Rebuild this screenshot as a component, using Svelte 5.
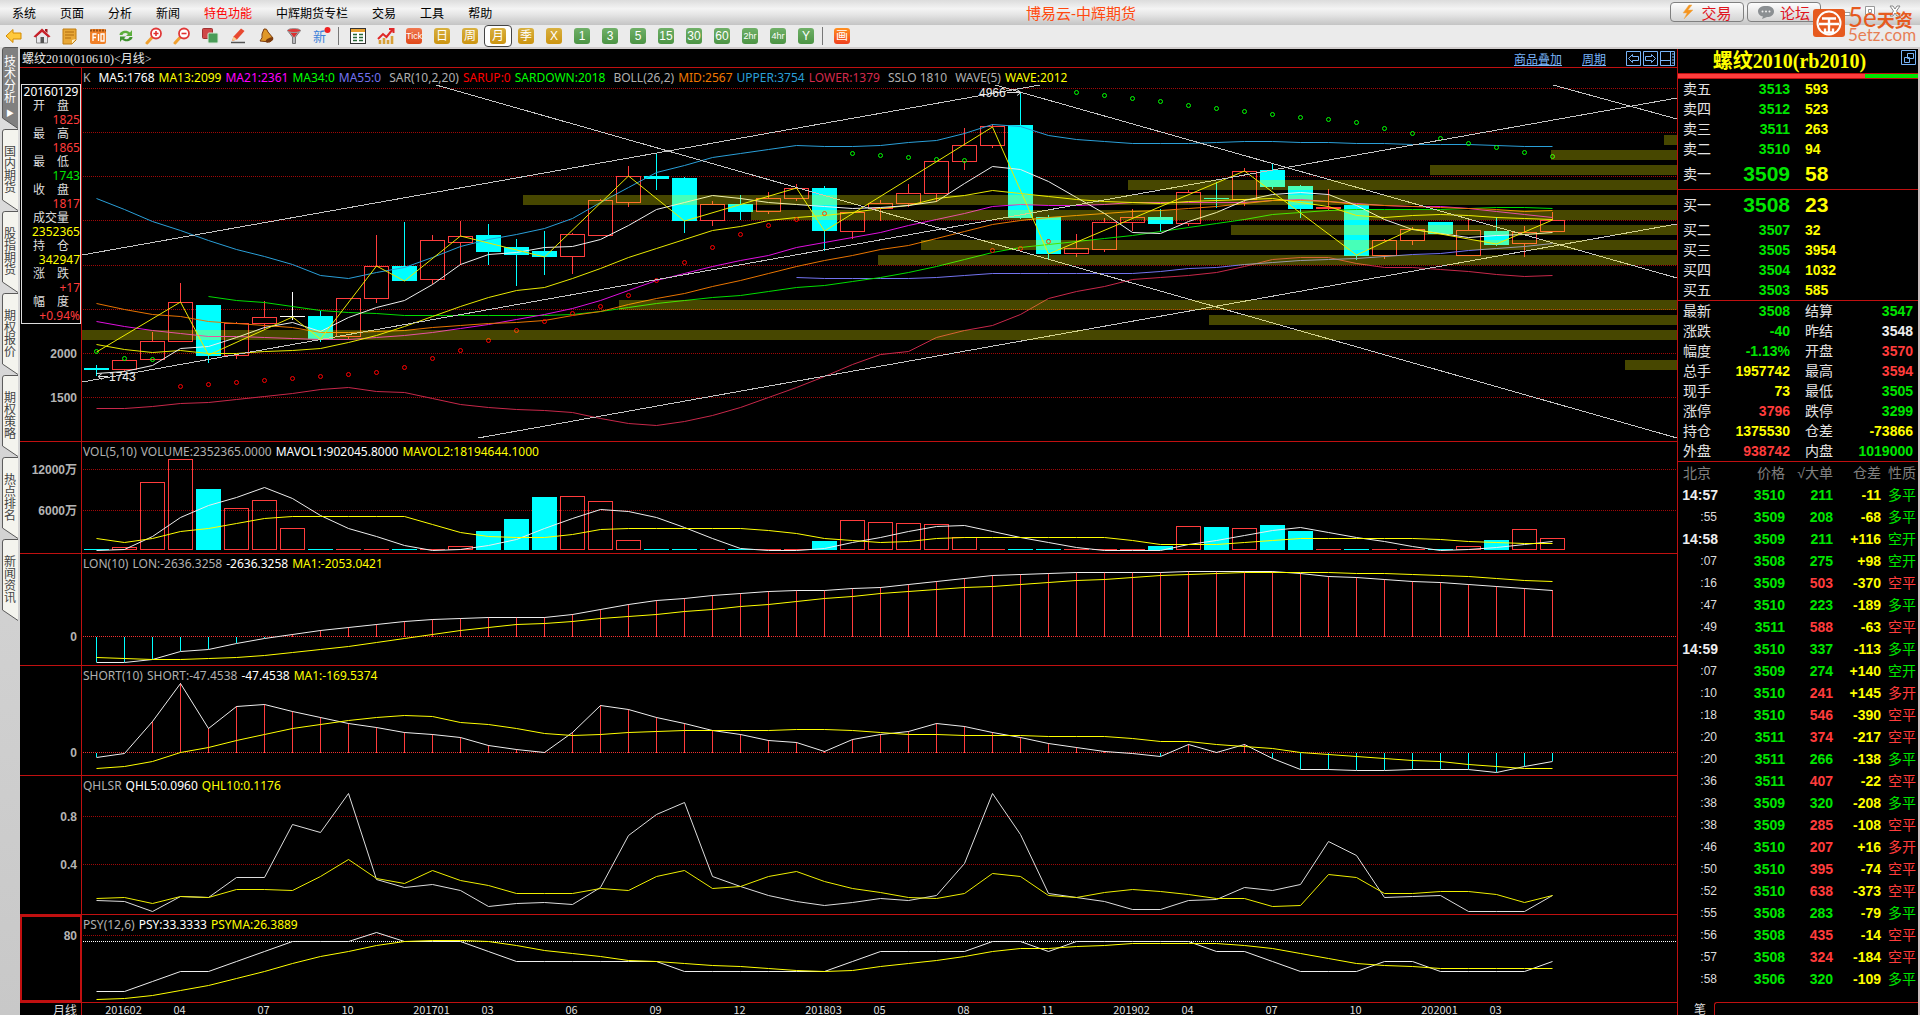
<script lang="ts">
  type Line = { color: string; start?: number; y: number[] };
  type Pane = {
    id: string;
    top: number;
    height: number;
    grid: number[];
    labels: [number, string][];
    legend: [string, string, boolean?][];
    zero?: number;
    lines: Line[];
  };

  const menu = ["系统", "页面", "分析", "新闻", "特色功能", "中辉期货专栏", "交易", "工具", "帮助"];
  const periods = [
    ["日", "gold"], ["周", "gold"], ["月", "gold"], ["季", "gold"], ["X", "gold"],
    ["1", "green"], ["3", "green"], ["5", "green"], ["15", "green"], ["30", "green"],
    ["60", "green"], ["2hr", "green"], ["4hr", "green"], ["Y", "green"],
  ];
  const tools = ["back", "home", "note", "f10", "refresh", "zoomin", "zoomout", "copy", "pencil", "bell", "filter", "new"];
  const sideTabs = ["技术分析", "国内期货", "股指期货", "期权报价", "期权策略", "热点排名", "新闻资讯"];

  const info = [
    ["开　盘", "1825", "up"], ["最　高", "1865", "up"], ["最　低", "1743", "down"],
    ["收　盘", "1817", "up"], ["成交量", "2352365", "yel"], ["持　仓", "342947", "yel"],
    ["涨　跌", "+17", "up"], ["幅　度", "+0.94%", "up"],
  ];

  const asks = [["卖五", "3513", "593"], ["卖四", "3512", "523"], ["卖三", "3511", "263"], ["卖二", "3510", "94"], ["卖一", "3509", "58"]];
  const bids = [["买一", "3508", "23"], ["买二", "3507", "32"], ["买三", "3505", "3954"], ["买四", "3504", "1032"], ["买五", "3503", "585"]];
  const stats = [
    ["最新", "3508", "down", "结算", "3547", "down"],
    ["涨跌", "-40", "down", "昨结", "3548", "even"],
    ["幅度", "-1.13%", "down", "开盘", "3570", "up"],
    ["总手", "1957742", "yel", "最高", "3594", "up"],
    ["现手", "73", "yel", "最低", "3505", "down"],
    ["涨停", "3796", "up", "跌停", "3299", "down"],
    ["持仓", "1375530", "yel", "仓差", "-73866", "yel"],
    ["外盘", "938742", "up", "内盘", "1019000", "down"],
  ];
  const ticks = [
    ["14:57", "3510", "211", "-11", "多平", "down"], [":55", "3509", "208", "-68", "多平", "down"],
    ["14:58", "3509", "211", "+116", "空开", "down"], [":07", "3508", "275", "+98", "空开", "down"],
    [":16", "3509", "503", "-370", "空平", "up"], [":47", "3510", "223", "-189", "多平", "down"],
    [":49", "3511", "588", "-63", "空平", "up"], ["14:59", "3510", "337", "-113", "多平", "down"],
    [":07", "3509", "274", "+140", "空开", "down"], [":10", "3510", "241", "+145", "多开", "up"],
    [":18", "3510", "546", "-390", "空平", "up"], [":20", "3511", "374", "-217", "空平", "up"],
    [":20", "3511", "266", "-138", "多平", "down"], [":36", "3511", "407", "-22", "空平", "up"],
    [":38", "3509", "320", "-208", "多平", "down"], [":38", "3509", "285", "-108", "空平", "up"],
    [":46", "3510", "207", "+16", "多开", "up"], [":50", "3510", "395", "-74", "空平", "up"],
    [":52", "3510", "638", "-373", "空平", "up"], [":55", "3508", "283", "-79", "多平", "down"],
    [":56", "3508", "435", "-14", "空平", "up"], [":57", "3508", "324", "-184", "空平", "up"],
    [":58", "3506", "320", "-109", "多平", "down"],
  ];

  // one bar per month, 28 units apart
  const cx = (i: number) => 96.5 + 28 * i;

  // kind, body top, body bottom, high, low
  const candles: [string, number, number, number, number][] = [
    ["c", 368, 370, 365, 376], ["r", 360, 369, 360, 372], ["r", 341, 359, 332, 359], ["r", 302, 341, 283, 341],
    ["c", 305, 356, 305, 363], ["r", 323, 355, 322, 359], ["r", 317, 323, 301, 330], ["w", 316, 317, 292, 320],
    ["c", 316, 339, 311, 342], ["r", 298, 336, 298, 339], ["r", 266, 298, 235, 303], ["c", 266, 281, 222, 281],
    ["r", 240, 279, 235, 284], ["r", 236, 242, 221, 265], ["c", 235, 252, 224, 265], ["c", 247, 255, 239, 286],
    ["c", 251, 257, 231, 275], ["r", 234, 256, 233, 274], ["r", 200, 235, 199, 235], ["r", 176, 202, 166, 207],
    ["c", 176, 179, 154, 190], ["c", 178, 221, 177, 233], ["r", 204, 220, 201, 226], ["c", 204, 212, 195, 220],
    ["r", 198, 211, 192, 214], ["r", 188, 198, 184, 201], ["c", 188, 231, 186, 251], ["r", 212, 231, 212, 239],
    ["r", 203, 208, 200, 221], ["r", 193, 203, 184, 207], ["r", 161, 193, 161, 202], ["r", 145, 161, 128, 170],
    ["r", 126, 145, 124, 148], ["c", 125, 218, 92, 219], ["c", 217, 254, 215, 259], ["r", 248, 253, 234, 257],
    ["r", 222, 249, 218, 252], ["r", 217, 222, 209, 231], ["c", 217, 224, 209, 232], ["r", 192, 223, 190, 226],
    ["c", 198, 199, 182, 208], ["r", 171, 199, 168, 206], ["c", 170, 187, 164, 189], ["c", 186, 209, 185, 218],
    ["r", 207, 208, 189, 210], ["c", 205, 256, 205, 260], ["r", 240, 255, 239, 259], ["r", 229, 240, 227, 245],
    ["c", 222, 234, 222, 234], ["r", 230, 255, 219, 256], ["c", 231, 245, 217, 246], ["r", 232, 243, 226, 257],
    ["r", 220, 231, 212, 232],
  ];

  // left edge and top of each price-band bar
  const bands = [
    [1664, 135], [1551, 150], [1430, 165], [1128, 180], [523, 195], [751, 210], [1231, 225],
    [921, 240], [878, 255], [619, 300], [1209, 315], [82, 330], [1625, 360],
  ];

  const channels = [
    [436, 85, 1677, 438], [82, 255, 1040, 85], [995, 85, 1677, 278],
    [82, 382, 1677, 98], [478, 438, 1677, 224], [1553, 85, 1677, 119],
  ];

  const wave = [
    [0, 352], [3, 302], [4, 355], [7, 317], [8, 339], [10, 266], [11, 281], [13, 236], [16, 257], [19, 176],
    [21, 221], [25, 188], [26, 231], [32, 127], [34, 254], [41, 171], [45, 255], [47, 229], [50, 244], [52, 220],
  ];

  const sar = [
    351, 358, 359, 386, 384, 382, 380, 378, 376, 374, 372, 367, 358, 350, 340, 330, 321, 313, 306, 295, 280, 262,
    247, 234, 225, 219, 213, 153, 155, 157, 159, 160, 250, 248, 241, 92, 95, 98, 101, 105, 108, 111, 114, 117,
    119, 122, 128, 133, 138, 143, 147, 152, 156,
  ];
  const sarUp = (i: number) => (i > 2 && i < 27) || (i > 31 && i < 35);

  // kind and top; flat bars sit on the base line
  const volBase = 549;
  const volumes: [string, number][] = [
    ["c", 549], ["r", 547], ["r", 482], ["r", 459], ["c", 489], ["r", 508], ["r", 500], ["r", 528], ["c", 549],
    ["r", 549], ["r", 549], ["c", 549], ["r", 549], ["r", 546], ["c", 531], ["c", 519], ["c", 497], ["r", 496],
    ["r", 501], ["r", 540], ["c", 549], ["c", 549], ["r", 549], ["c", 549], ["r", 549], ["r", 549], ["c", 541],
    ["r", 520], ["r", 522], ["r", 523], ["r", 524], ["r", 537], ["r", 549], ["c", 549], ["c", 549], ["r", 549],
    ["r", 549], ["r", 549], ["c", 546], ["r", 526], ["c", 527], ["r", 528], ["c", 525], ["c", 531], ["r", 549],
    ["c", 549], ["r", 549], ["r", 549], ["c", 549], ["r", 546], ["c", 540], ["r", 529], ["r", 538],
  ];

  const panes: Pane[] = [
    {
      id: "k", top: 68, height: 374,
      grid: [88, 132, 176, 220, 265, 309, 353, 397],
      labels: [[353, "2000"], [397, "1500"]],
      legend: [
        ["K", "#b0b0b0"], ["MA5:1768", "#fff", true], ["MA13:2099", "#ff0"], ["MA21:2361", "#f0f"], ["MA34:0", "#0f0"],
        ["MA55:0", "#7373f0"], ["SAR(10,2,20)", "#b0b0b0", true], ["SARUP:0", "#f00"], ["SARDOWN:2018", "#0f0"],
        ["BOLL(26,2)", "#b0b0b0", true], ["MID:2567", "#f07800"], ["UPPER:3754", "#2a9fd8"], ["LOWER:1379", "#d42a4c"],
        ["SSLO 1810", "#b0b0b0", true], ["WAVE(5)", "#b0b0b0", true], ["WAVE:2012", "#ff0"],
      ],
      lines: [
        { color: "#2a9fd8", y: [198, 209, 221, 230, 240, 249, 256, 264, 275, 278, 272, 267, 257, 246, 239, 234, 228, 218, 202, 187, 172, 165, 157, 153, 149, 145, 146, 146, 145, 142, 140, 133, 124, 126, 135, 139, 141, 143, 143, 143, 142, 141, 141, 142, 142, 143, 143, 144, 144, 144, 145, 146, 146] },
        { color: "#c8284a", y: [408, 408, 406, 403, 402, 399, 396, 393, 389, 387, 391, 392, 398, 404, 407, 409, 410, 412, 418, 423, 425, 421, 415, 407, 397, 387, 376, 364, 354, 351, 337, 330, 325, 314, 298, 291, 286, 279, 277, 275, 272, 266, 259, 257, 257, 263, 267, 267, 269, 271, 274, 276, 275] },
        { color: "#7373f0", start: 25, y: [277, 278, 278, 278, 278, 277, 275, 273, 273, 273, 273, 273, 273, 271, 268, 267, 264, 262, 260, 259, 258, 256, 254, 253, 250, 248, 246, 243] },
        { color: "#00dd00", start: 4, y: [296, 300, 302, 306, 310, 312, 313, 315, 315, 315, 315, 315, 315, 314, 311, 307, 303, 300, 297, 295, 291, 287, 285, 281, 277, 272, 266, 259, 252, 247, 244, 241, 238, 235, 231, 227, 223, 219, 214, 212, 210, 209, 209, 209, 209, 208, 207, 207, 208] },
        { color: "#e010e0", y: [321, 326, 330, 333, 336, 336, 337, 338, 339, 339, 337, 335, 332, 328, 324, 319, 314, 308, 300, 290, 280, 273, 266, 260, 255, 247, 242, 237, 232, 225, 219, 213, 206, 204, 205, 205, 204, 202, 202, 202, 202, 202, 200, 199, 201, 203, 205, 206, 206, 208, 211, 214, 217] },
        { color: "#e87400", y: [303, 309, 314, 316, 321, 323, 325, 327, 332, 332, 331, 330, 327, 325, 323, 322, 320, 315, 311, 304, 298, 293, 286, 280, 273, 266, 260, 255, 249, 245, 238, 231, 224, 220, 217, 215, 213, 211, 210, 208, 206, 203, 200, 200, 201, 204, 205, 206, 207, 208, 209, 211, 210] },
        { color: "#e8e800", y: [344, 349, 352, 350, 353, 353, 351, 350, 348, 342, 335, 326, 316, 306, 297, 290, 287, 278, 268, 257, 248, 239, 230, 226, 220, 217, 215, 212, 208, 205, 198, 195, 190, 193, 196, 199, 201, 202, 203, 201, 200, 199, 198, 202, 206, 215, 217, 215, 214, 215, 217, 218, 219] },
        { color: "#eeeeee", y: [373, 371, 365, 348, 346, 337, 327, 322, 331, 317, 307, 300, 284, 264, 254, 252, 247, 246, 239, 225, 209, 202, 195, 198, 202, 204, 206, 208, 207, 205, 201, 183, 166, 169, 181, 197, 213, 232, 233, 221, 212, 200, 194, 192, 194, 205, 219, 229, 233, 237, 235, 234, 232] },
      ],
    },
    {
      id: "vol", top: 442, height: 112,
      grid: [469, 510],
      labels: [[469, "12000万"], [510, "6000万"]],
      legend: [["VOL(5,10)", "#b0b0b0"], ["VOLUME:2352365.0000", "#b0b0b0"], ["MAVOL1:902045.8000", "#fff"], ["MAVOL2:18194644.1000", "#ff0"]],
      lines: [
        { color: "#eeeeee", y: [550, 549, 536, 517, 505, 497, 487, 498, 515, 528, 536, 545, 550, 549, 545, 539, 528, 518, 509, 511, 517, 527, 538, 548, 550, 550, 548, 542, 537, 531, 526, 525, 531, 537, 542, 547, 550, 550, 550, 544, 540, 535, 530, 527, 532, 537, 541, 546, 550, 549, 547, 544, 541] },
        { color: "#ffff00", y: [538, 542, 538, 531, 528, 523, 518, 516, 516, 516, 516, 516, 524, 532, 536, 537, 537, 534, 529, 528, 528, 528, 528, 528, 530, 533, 538, 540, 542, 541, 538, 537, 537, 537, 537, 537, 537, 540, 544, 544, 544, 542, 540, 538, 538, 538, 538, 538, 539, 541, 542, 543, 543] },
      ],
    },
    {
      id: "lon", top: 554, height: 112, zero: 636,
      grid: [],
      labels: [[636, "0"]],
      legend: [["LON(10)", "#b0b0b0"], ["LON:-2636.3258", "#b0b0b0"], ["-2636.3258", "#fff"], ["MA1:-2053.0421", "#ff0"]],
      lines: [
        { color: "#eeeeee", y: [662, 662, 659, 651, 649, 643, 638, 634, 630, 627, 624, 621, 619, 618, 617, 617, 617, 614, 609, 604, 600, 598, 595, 593, 591, 590, 590, 588, 587, 584, 581, 578, 575, 574, 573, 572, 572, 572, 572, 571, 571, 571, 571, 573, 576, 577, 579, 581, 582, 584, 586, 588, 590] },
        { color: "#ffff00", y: [657, 658, 659, 659, 658, 657, 655, 652, 649, 646, 642, 638, 634, 630, 627, 624, 623, 621, 618, 616, 614, 611, 609, 606, 604, 601, 598, 596, 593, 591, 589, 587, 586, 584, 582, 580, 579, 577, 575, 574, 573, 572, 572, 572, 572, 573, 573, 574, 575, 576, 578, 580, 581] },
      ],
    },
    {
      id: "short", top: 666, height: 110, zero: 752,
      grid: [],
      labels: [[752, "0"]],
      legend: [["SHORT(10)", "#b0b0b0"], ["SHORT:-47.4538", "#b0b0b0"], ["-47.4538", "#fff"], ["MA1:-169.5374", "#ff0"]],
      lines: [
        { color: "#eeeeee", y: [757, 753, 721, 683, 728, 706, 704, 711, 717, 723, 727, 732, 734, 737, 745, 749, 752, 732, 705, 709, 717, 723, 730, 734, 740, 742, 751, 739, 734, 731, 723, 726, 732, 737, 743, 747, 751, 753, 756, 744, 752, 744, 758, 769, 769, 770, 770, 769, 769, 769, 772, 766, 761] },
        { color: "#ffff00", y: [768, 766, 761, 752, 747, 740, 734, 728, 724, 720, 717, 715, 716, 722, 724, 728, 733, 735, 734, 732, 731, 730, 730, 730, 730, 729, 729, 730, 732, 734, 734, 735, 735, 735, 736, 736, 736, 738, 741, 741, 744, 746, 748, 752, 754, 756, 758, 760, 761, 764, 766, 768, 768] },
      ],
    },
    {
      id: "qhl", top: 776, height: 139,
      grid: [816, 864],
      labels: [[816, "0.8"], [864, "0.4"]],
      legend: [["QHLSR", "#b0b0b0"], ["QHL5:0.0960", "#fff"], ["QHL10:0.1176", "#ff0"]],
      lines: [
        { color: "#dddddd", y: [900, 901, 911, 896, 897, 877, 877, 824, 832, 793, 879, 887, 884, 890, 906, 903, 902, 904, 887, 835, 814, 802, 876, 886, 895, 901, 905, 902, 898, 900, 895, 863, 793, 834, 893, 897, 901, 909, 909, 900, 899, 887, 890, 884, 841, 855, 897, 896, 895, 911, 911, 911, 895] },
        { color: "#eeee00", y: [898, 897, 903, 896, 897, 889, 889, 890, 876, 859, 878, 883, 870, 880, 885, 893, 893, 893, 888, 890, 876, 870, 888, 886, 876, 871, 881, 888, 892, 897, 898, 893, 873, 876, 895, 897, 892, 889, 891, 894, 898, 898, 906, 905, 874, 877, 893, 893, 891, 891, 894, 902, 895] },
      ],
    },
    {
      id: "psy", top: 915, height: 88,
      grid: [935],
      labels: [[935, "80"]],
      legend: [["PSY(12,6)", "#b0b0b0"], ["PSY:33.3333", "#fff"], ["PSYMA:26.3889", "#ff0"]],
      lines: [
        { color: "#eeeeee", y: [991, 991, 981, 971, 971, 961, 951, 941, 941, 941, 932, 941, 941, 941, 951, 961, 961, 961, 961, 961, 961, 971, 971, 971, 971, 971, 971, 961, 951, 951, 951, 951, 941, 941, 951, 941, 941, 941, 941, 941, 951, 951, 961, 971, 971, 971, 961, 961, 971, 971, 971, 971, 961] },
        { color: "#ffff00", y: [999, 998, 995, 990, 985, 978, 971, 963, 956, 951, 945, 941, 940, 940, 941, 945, 950, 953, 956, 960, 961, 963, 965, 966, 968, 970, 971, 970, 966, 963, 960, 956, 951, 948, 948, 946, 945, 943, 943, 943, 943, 945, 948, 953, 958, 963, 965, 966, 968, 968, 968, 968, 968] },
      ],
    },
  ];

  const months: [number, string][] = [
    [1, "201602"], [3, "04"], [6, "07"], [9, "10"], [12, "201701"], [14, "03"], [17, "06"], [20, "09"], [23, "12"],
    [26, "201803"], [28, "05"], [31, "08"], [34, "11"], [37, "201902"], [39, "04"], [42, "07"], [45, "10"],
    [48, "202001"], [50, "03"],
  ];

  const points = (l: Line) => l.y.map((y, i) => `${cx(i + (l.start ?? 0))},${y + 0.5}`).join(" ");

  let period = $state("月");
  let sideTab = $state("技术分析");
</script>

<div class="app">
  <header class="menubar">
    <nav class="menu">
      {#each menu as item}
        <a href="#menu" class:hot={item === "特色功能"}>{item}</a>
      {/each}
    </nav>
    <h1 class="title">博易云-中辉期货</h1>
    <div class="actions">
      <button class="action">
        <svg width="12" height="16" viewBox="0 0 12 16"><path d="M7 1 1 9h4l-3 6 9-9H6l4-5z" fill="#f7941d" stroke="#e8b060" stroke-width=".5" /></svg>
        交易
      </button>
      <button class="action forum">
        <svg width="18" height="14" viewBox="0 0 18 14"><path d="M9 1c5 0 8 2 8 5.5s-3 5.500-7 5.500L5 14l1-2.400C3 11 1 9 1 6.500 1 3 4 1 9 1z" fill="#8b8f92" /><g fill="#eee"><circle cx="5.5" cy="6.5" r="1" /><circle cx="9" cy="6.5" r="1" /><circle cx="12.5" cy="6.5" r="1" /></g></svg>
        论坛
      </button>
      <div class="window">
        <button aria-label="最小化"><svg width="12" height="14" viewBox="0 0 12 14"><path d="M1 8.5h9v3h-9z" fill="#fff" stroke="#999" /></svg></button>
        <button aria-label="最大化"><svg width="12" height="14" viewBox="0 0 12 14"><path d="M1.5 2.5h9v8h-9zM4.5 5.5h3v3h-3z" fill="#fff" stroke="#999" /></svg></button>
        <button aria-label="关闭"><svg width="14" height="14" viewBox="0 0 14 14"><path d="M2 2h3l2 3 2-3h3L8.5 7l3.500 5H9L7 9l-2 3H2l3.500-5z" fill="#fff" stroke="#888" /></svg></button>
      </div>
      <div class="logo">
        <svg width="32" height="28" viewBox="0 0 32 28">
          <rect width="32" height="28" rx="3" fill="#e65a1e" />
          <circle cx="16" cy="14" r="11.5" fill="none" stroke="#fff" stroke-width="2" />
          <path d="M9 9.5h14M6 15h20M16 9.5v14M12 19.5v4h8v-4" fill="none" stroke="#fff" stroke-width="2.4" />
        </svg>
        <div class="brand"><strong><span>5e</span>天资</strong><small>5etz.com</small></div>
      </div>
    </div>
  </header>

  <div class="toolbar">
    {#each tools as tool}
      <button class="tool" aria-label={tool}>
        <svg width="18" height="18" viewBox="0 0 18 18">
          {#if tool === "back"}
            <path d="M1 9 8 2.5V6h8v6H8v3.500z" fill="#ffc93c" stroke="#d38a00" />
          {:else if tool === "home"}
            <path d="M3.5 9v7h11V9L9 4z" fill="#e8e8ec" stroke="#888" />
            <path d="M.5 9.5 9 1.5l8.500 8-2 1L9 5 2.5 10.5z" fill="#c8202a" />
            <path d="M12 2h2.500v4L12 4z" fill="#a01820" />
            <path d="M7.5 10h3.500v6H7.500z" fill="#555" />
          {:else if tool === "note"}
            <path d="M2 2h13v11l-4 4H2z" fill="#e8a838" stroke="#c07c10" />
            <path d="M4 5h9M4 8h9M4 11h6" stroke="#b06c10" />
            <path d="m15 12-4 4.500V13z" fill="#fff0c0" />
          {:else if tool === "f10"}
            <rect x="1" y="2" width="16" height="15" rx="2" fill="#f08028" />
            <path d="M1 3.5h16" stroke="#9a5010" stroke-width="2" stroke-dasharray="2 1" />
            <path d="M4 14V7h3.500M4 10.5h3M9.5 7v7M12 7h3v7h-3z" fill="none" stroke="#fff" stroke-width="1.3" />
          {:else if tool === "refresh"}
            <path d="M2.5 8c0-4 7-6 10.500-2.500L15 3v6H9l2-2C8.5 5 6 6 5.5 8z" fill="#5cae3c" />
            <path d="M15.5 10c0 4-7 6-10.500 2.500L3 15V9.500h6l-2 1.800C9.5 13 12 12 12.500 10z" fill="#3f9230" />
          {:else if tool === "zoomin" || tool === "zoomout"}
            <path d="m2 16 5-5.500" stroke="#f0a030" stroke-width="3" stroke-linecap="round" />
            <circle cx="11" cy="6.5" r="5" fill="#fff" stroke="#e03838" stroke-width="1.8" />
            <path d={tool === "zoomin" ? "M8.5 6.5h5M11 4v5" : "M8.5 6.5h5"} stroke="#e03030" stroke-width="1.6" />
          {:else if tool === "copy"}
            <rect x="1.5" y="1.5" width="10" height="10" rx="1" fill="#d04848" stroke="#a03030" />
            <rect x="7" y="6" width="10" height="10" rx="1" fill="#4a9c58" stroke="#d8e8d8" />
          {:else if tool === "pencil"}
            <path d="M3 14 4.5 9.5 12 1.5l3.500 2.500-7.500 8.500z" fill="#e84830" />
            <path d="M3 14 4.5 9.5l3.500 3z" fill="#f8d090" />
            <path d="M2 15.5h14" stroke="#555" stroke-width="1.5" />
          {:else if tool === "bell"}
            <path d="M7 2q3-1 4 3l5 6-3 4-10-1q3-3 2-7z" fill="#e09828" stroke="#7c3c10" />
            <ellipse cx="12.5" cy="13" rx="4" ry="2" transform="rotate(-25 12.5 13)" fill="#7c3c10" />
          {:else if tool === "filter"}
            <path d="M2.5 3.5 7.5 10v6.500h3V10l5-6.500z" fill="#b8b8bc" stroke="#777" />
            <ellipse cx="9" cy="3.5" rx="6.5" ry="2" fill="#e03838" stroke="#999" />
            <path d="m5.5 6 3.500 4.500L12.500 6z" fill="#d83030" />
          {:else}
            <text x="0" y="14" class="newtext">新</text>
            <circle cx="14.5" cy="3" r="3" fill="#f02020" />
          {/if}
        </svg>
      </button>
    {/each}
    <span class="sep"></span>
    <button class="tool" aria-label="报价">
      <svg width="18" height="18" viewBox="0 0 18 18"><rect x="1.5" y="1.5" width="15" height="15" fill="#fff" stroke="#333" /><path d="M2 3.5h14" stroke="#e8a030" stroke-width="3" /><path d="M4 7.5h4M10 7.5h4M4 10.5h4M10 10.5h4M4 13.5h4M10 13.5h4" stroke="#286838" stroke-width="1.4" /></svg>
    </button>
    <button class="tool" aria-label="走势">
      <svg width="18" height="18" viewBox="0 0 18 18"><path d="M3 17v-4M7 17v-6M11 17v-4M15 17V9" stroke="#d8a038" stroke-width="2.6" /><path d="m1 12 5-5 3.500 3L16 2M12 2h4.500v4" fill="none" stroke="#e02828" stroke-width="2" /></svg>
    </button>
    <button class="tool"><span class="badge red tiny">Tick</span></button>
    {#each periods as [name, tone]}
      <button class="tool" class:active={period === name} onclick={() => (period = name)}>
        <span class="badge {tone}" class:tiny={name.length > 2}>{name}</span>
      </button>
    {/each}
    <span class="sep"></span>
    <button class="tool"><span class="badge draw">画</span></button>
  </div>

  <div class="body">
    <nav class="sidetabs">
      {#each sideTabs as tab}
        <button class:on={sideTab === tab} onclick={() => (sideTab = tab)}>
          <svg class="shape" viewBox="0 0 17 82" preserveAspectRatio="none"><path d="M17 .5H3Q.5 .5 .5 3V71L17 81.5" /></svg>
          <span>{tab}{#if sideTab === tab}<i>▶</i>{/if}</span>
        </button>
      {/each}
    </nav>

    <main class="charts">
      <div class="caption">
        <span class="name">螺纹2010(010610)&lt;月线&gt;</span>
        <a href="#overlay">商品叠加</a>
        <a href="#period">周期</a>
        <div class="nav">
          <button aria-label="左移"><svg width="16" height="15" viewBox="0 0 16 15"><path d="M.5.5h14v14H.5zM2.5 7.5l4-4v2h6v4h-6v2z" /></svg></button>
          <button aria-label="右移"><svg width="16" height="15" viewBox="0 0 16 15"><path d="M.5.5h14v14H.5zM12.5 7.5l-4-4v2h-6v4h6v2z" /></svg></button>
          <button aria-label="布局"><svg width="16" height="15" viewBox="0 0 16 15"><path d="M.5.5h14v14H.5zM10.5 1v13M1 9.5h9.500" /><path d="M13 2v12" stroke-dasharray="2 1" /></svg></button>
        </div>
      </div>

      {#each panes as pane}
        <section class="pane" style="flex-grow: {pane.height}">
          <svg class="plot" viewBox="20 {pane.top} 1657 {pane.height}" preserveAspectRatio="none">
            {#each pane.grid as y}
              <line class="grid" x1="83" x2="1677" y1={y + 0.5} y2={y + 0.5} />
            {/each}
            {#if pane.zero}
              <line class="grid zero" x1="83" x2="1677" y1={pane.zero + 0.5} y2={pane.zero + 0.5} />
              {#each pane.lines[0].y as y, i}
                <line class={y > pane.zero ? "stick low" : "stick"} x1={cx(i)} x2={cx(i)} y1={pane.zero + 0.5} y2={y} />
              {/each}
            {/if}
            {#if pane.id === "psy"}
              <line class="grid mark" x1="83" x2="1677" y1="941.5" y2="941.5" />
            {/if}
            {#if pane.id === "k"}
              {#each candles as [kind, top, bottom, high, low], i}
                {#if kind === "r"}
                  <path class="r" d="M{cx(i)} {high}V{top}M{cx(i)} {bottom}V{low}M{cx(i) - 12} {top + 0.5}h24V{bottom + 0.5}h-24z" />
                {:else}
                  <rect class={kind} x={cx(i) - 12.5} y={top} width="25" height={bottom - top} />
                  <path class="wick {kind}" d="M{cx(i)} {high}V{low}" />
                {/if}
              {/each}
            {/if}
            {#if pane.id === "vol"}
              {#each volumes as [kind, top], i}
                {#if kind === "r" && top < volBase}
                  <rect class="r" x={cx(i) - 12} y={top + 0.5} width="24" height={volBase - top} />
                {:else}
                  <rect class={kind === "r" ? "flat" : "c"} x={cx(i) - 12.5} y={top} width="25" height={volBase + 1 - top} />
                {/if}
              {/each}
            {/if}
            {#each pane.lines as line}
              <polyline points={points(line)} stroke={line.color} />
            {/each}
            {#if pane.id === "k"}
              {#each sar as y, i}
                <circle cx={cx(i)} cy={y + 0.5} r="2" stroke={sarUp(i) ? "#f00" : "#0f0"} />
              {/each}
              <polyline points={wave.map(([i, y]) => `${cx(i)},${y}`).join(" ")} stroke="#e8e800" />
              {#each channels as [x1, y1, x2, y2]}
                <line class="channel" {x1} {y1} {x2} {y2} />
              {/each}
              {#each bands as [x, y]}
                <rect class="band" {x} {y} width={1677 - x} height="10" />
              {/each}
              <path d="M1007 92.5h14m-4-3 4 3-4 3M108 376.5H98m4-3-4 3 4 3" stroke="#ddd" />
              <text class="price" x="979" y="97">4966</text>
              <text class="price" x="109" y="381">1743</text>
            {/if}
            <line class="frame" x1="81.5" x2="81.5" y1={pane.top} y2={pane.top + pane.height} />
            <line class="frame" x1="20" x2="1677" y1={pane.top + pane.height - 0.5} y2={pane.top + pane.height - 0.5} />
            {#each pane.labels as [y, text]}
              <text class="axis" x="77" y={y + 5}>{text}</text>
            {/each}
            {#if pane.id === "psy"}
              <rect class="selected" x="21" y="916" width="60" height="85" />
            {/if}
          </svg>
          <div class="legend">
            {#each pane.legend as [text, color, group]}
              <span class:group style="color: {color}">{text}</span>
            {/each}
          </div>
          {#if pane.id === "k"}
            <dl class="info">
              <dt class="date">20160129</dt>
              {#each info as [label, value, tone]}
                <dt>{label}</dt>
                <dd class={tone}>{value}</dd>
              {/each}
            </dl>
          {/if}
        </section>
      {/each}

      <svg class="months" viewBox="20 1003 1657 12" preserveAspectRatio="none">
        <line class="frame" x1="81.5" x2="81.5" y1="1003" y2="1015" />
        <text class="unit" x="77" y="1015">月线</text>
        {#each months as [i, text]}
          <text x={cx(i) - 1} y="1014">{text}</text>
        {/each}
      </svg>
    </main>

    <aside class="quote">
      <div class="symbol">
        <h2>螺纹2010(rb2010)</h2>
        <button aria-label="弹出"><svg width="16" height="15" viewBox="0 0 16 15"><path d="M.5.5h14v14H.5zM6.5 3.5h6v5h-6zM3.5 7.5h5v5h-5z" /></svg></button>
      </div>
      <div class="ratio"><span></span></div>
      {#each [asks, bids] as side}
        <table class="book">
          <tbody>
            {#each side as [label, price, amount]}
              <tr class:best={label.endsWith("一")}>
                <th>{label}</th>
                <td class="down">{price}</td>
                <td class="yel amount">{amount}</td>
              </tr>
            {/each}
          </tbody>
        </table>
      {/each}
      <table class="stats">
        <tbody>
          {#each stats as [l1, v1, t1, l2, v2, t2]}
            <tr><th>{l1}</th><td class={t1}>{v1}</td><th class="second">{l2}</th><td class={t2}>{v2}</td></tr>
          {/each}
        </tbody>
      </table>
      <table class="ticks">
        <thead>
          <tr><th class="time">北京</th><th>价格</th><th>√大单</th><th>仓差</th><th class="kind">性质</th></tr>
        </thead>
        <tbody>
          {#each ticks as [time, price, lots, delta, kind, tone]}
            <tr>
              <td class={time.length > 3 ? "clock full" : "clock"}>{time}</td>
              <td class="down">{price}</td>
              <td class={tone}>{lots}</td>
              <td class="yel">{delta}</td>
              <td class="kind {tone}">{kind}</td>
            </tr>
          {/each}
        </tbody>
      </table>
      <div class="foot"><button>笔</button><span></span></div>
    </aside>
  </div>
</div>

<style>
  :global(body) {
    background: #000;
  }
  .app {
    display: flex;
    flex-direction: column;
    height: 100vh;
    overflow: hidden;
    font-family: "Liberation Sans", "Noto Sans CJK SC", sans-serif;
    font-size: 12px;
    color: #ddd;
  }
  button {
    padding: 0;
    border: 0;
    background: none;
    font: inherit;
    color: inherit;
    cursor: pointer;
  }
  .menubar {
    flex: none;
    display: flex;
    justify-content: space-between;
    align-items: center;
    height: 25px;
    background: linear-gradient(#dcdcdc, #f4f4f4 35%, #e4e4e4 60%, #c4c4c4);
  }
  .menu {
    display: flex;
    gap: 24px;
    padding-left: 12px;
  }
  .menu a {
    color: #000;
    text-decoration: none;
  }
  .menu .hot {
    color: #f00;
  }
  .title {
    margin: 0;
    font-size: 15px;
    font-weight: 400;
    color: #ff4a10;
  }
  .actions {
    position: relative;
    display: flex;
    gap: 3px;
    width: 250px;
    height: 21px;
  }
  .action {
    box-sizing: border-box;
    display: flex;
    align-items: center;
    justify-content: center;
    gap: 7px;
    width: 74px;
    height: 20px;
    border: 1px solid #808080;
    border-radius: 4px;
    background: linear-gradient(#fdfdfd, #d4d4d4);
    font-size: 15px;
    color: #e0141e;
  }
  .forum {
    justify-content: flex-start;
    gap: 5px;
    padding-left: 9px;
  }
  .window {
    display: flex;
    gap: 12px;
    padding-left: 16px;
  }
  .logo {
    position: absolute;
    top: 7px;
    left: 143px;
    z-index: 1;
    display: flex;
    gap: 3px;
    color: #e65a1e;
  }
  .brand {
    display: flex;
    flex-direction: column;
    white-space: nowrap;
    font-family: Lato, "Noto Sans CJK SC", sans-serif;
  }
  .brand strong {
    font-size: 18px;
    line-height: 16px;
  }
  .brand span {
    font-size: 26px;
    font-weight: 400;
  }
  .brand small {
    font-size: 17px;
    line-height: 13px;
    opacity: 0.75;
  }
  .toolbar {
    flex: none;
    display: flex;
    align-items: center;
    height: 22px;
    border-bottom: 2px solid #d0cccc;
    background: #ebebeb;
  }
  .tool {
    box-sizing: border-box;
    display: flex;
    align-items: center;
    justify-content: center;
    width: 28px;
    height: 22px;
  }
  .tool.active {
    border: 1px solid #444;
    border-radius: 4px;
    background: #fff;
  }
  .sep {
    width: 1px;
    height: 18px;
    margin: 0 5px 0 2px;
    background: #777;
  }
  .badge {
    width: 16px;
    height: 16px;
    border-radius: 3px;
    font-size: 12px;
    line-height: 16px;
    text-align: center;
    color: #fff;
  }
  .gold {
    background: linear-gradient(#d8b040, #cc9410);
  }
  .green {
    background: linear-gradient(#70b068, #4c9444);
  }
  .red {
    background: linear-gradient(#f07850, #e04818);
  }
  .draw {
    background: linear-gradient(#ff9020, #f04020);
  }
  .tiny {
    font-size: 9px;
  }
  .newtext {
    font-size: 13px;
    fill: #3c80d8;
  }
  .body {
    flex: 1;
    display: flex;
    min-height: 0;
    border-right: 2px solid #c8bcbc;
  }
  .sidetabs {
    flex: none;
    width: 20px;
    margin-top: -2px;
    background: linear-gradient(#dedede, #c8c8c8);
  }
  .sidetabs button {
    position: relative;
    display: block;
    width: 16px;
    height: 82px;
    margin-left: 2px;
    line-height: 12px;
    color: #444;
  }
  .sidetabs span {
    position: relative;
    display: block;
    width: 12px;
    margin-left: 2px;
    word-break: break-all;
  }
  .sidetabs i {
    display: block;
    padding-top: 4px;
    font-size: 8px;
    font-style: normal;
  }
  .shape {
    position: absolute;
    inset: 0;
    width: 100%;
    height: 100%;
    overflow: visible;
  }
  .shape path {
    fill: #f4f4ee;
    stroke: #555;
  }
  .on .shape path {
    fill: #808080;
  }
  .sidetabs .on {
    color: #fff;
  }
  .charts {
    flex: 1;
    display: flex;
    flex-direction: column;
    min-width: 0;
    background: #000;
  }
  .caption {
    flex: none;
    display: flex;
    align-items: center;
    gap: 20px;
    height: 18px;
    border-bottom: 1px solid #c01010;
    color: #e8e8e8;
  }
  .name {
    margin-right: auto;
    padding-left: 2px;
    font-family: "Liberation Serif", "Noto Sans CJK SC", serif;
  }
  .caption a {
    color: #78b4f8;
  }
  .nav {
    display: flex;
    gap: 1px;
    padding-right: 1px;
  }
  .nav button,
  .symbol button {
    display: flex;
  }
  .nav path,
  .symbol path {
    fill: none;
    stroke: #78b4f8;
  }
  .pane {
    position: relative;
    flex: 1 1 0;
    min-height: 0;
  }
  .plot,
  .months {
    display: block;
    width: 100%;
    height: 100%;
    fill: none;
  }
  .months {
    flex: none;
    height: 12px;
  }
  .months text {
    font-size: 11px;
    font-family: "Noto Sans CJK SC", sans-serif;
    text-anchor: middle;
    fill: #ddd;
  }
  .months .unit {
    font-size: 12px;
    text-anchor: end;
  }
  .grid,
  .frame,
  .stick,
  .channel,
  .r,
  .c,
  .w,
  .flat,
  .band,
  .selected {
    shape-rendering: crispEdges;
  }
  .grid {
    stroke: #a00808;
    stroke-dasharray: 1 1;
  }
  .grid.zero {
    stroke: #f03030;
  }
  .grid.mark {
    stroke: #fff;
  }
  .frame {
    stroke: #c01010;
  }
  .selected {
    stroke: #c01010;
    stroke-width: 2px;
  }
  .stick {
    stroke: #ff3c3c;
  }
  .stick.low {
    stroke: #0ff;
  }
  .r {
    stroke: #ff3c3c;
  }
  .flat {
    fill: #ff3c3c;
  }
  .c {
    fill: #0ff;
  }
  .w {
    fill: #fff;
  }
  .wick.c {
    stroke: #0ff;
  }
  .wick.w {
    stroke: #fff;
  }
  .band {
    fill: rgba(255, 255, 0, 0.28);
  }
  .channel {
    stroke: #c4c4c4;
  }
  .price {
    font-size: 12px;
    fill: #eee;
  }
  .axis {
    font-size: 12px;
    font-weight: 700;
    text-anchor: end;
    fill: #b4b4b4;
  }
  .legend,
  .info {
    font-family: "Noto Sans", "Noto Sans CJK SC", sans-serif;
  }
  .legend {
    position: absolute;
    top: 0;
    left: 63px;
    display: flex;
    gap: 4px;
    line-height: 20px;
    white-space: nowrap;
  }
  .group {
    margin-left: 4px;
  }
  .info {
    position: absolute;
    top: 16px;
    left: 1px;
    box-sizing: border-box;
    width: 60px;
    margin: 0;
    border: 1px solid #ddd;
    background: #000;
    line-height: 14px;
  }
  .info dt {
    text-align: center;
  }
  .info .date {
    color: #fff;
  }
  .info dd {
    margin: 0;
    text-align: right;
  }
  .up {
    color: #ff3c3c;
  }
  .down {
    color: #00e600;
  }
  .yel {
    color: #ff0;
  }
  .even {
    color: #eee;
  }
  .quote {
    flex: none;
    display: flex;
    flex-direction: column;
    width: 240px;
    border-left: 1px solid #c01010;
    background: #000;
    font-size: 14px;
  }
  .symbol {
    flex: none;
    display: flex;
    align-items: flex-start;
    height: 24px;
    padding-right: 1px;
  }
  .symbol h2 {
    flex: 1;
    margin: 0;
    font-family: "Liberation Serif", "Noto Sans CJK SC", serif;
    font-size: 20px;
    line-height: 24px;
    text-align: center;
    color: #ff0;
  }
  .symbol button {
    padding-top: 1px;
  }
  .ratio {
    flex: none;
    height: 4px;
    border-top: 1px solid #c01010;
    border-bottom: 1px solid #c01010;
    background: #00e600;
  }
  .ratio span {
    display: block;
    width: 78%;
    height: 4px;
    background: #ff3c3c;
  }
  table {
    flex: none;
    width: 100%;
    table-layout: fixed;
    border-collapse: collapse;
  }
  th,
  td {
    padding: 0;
    height: 20px;
    line-height: 20px;
    white-space: nowrap;
  }
  th {
    padding-left: 5px;
    font-weight: 400;
    text-align: left;
    color: #e4e4e4;
  }
  td {
    font-weight: 700;
    text-align: right;
  }
  .book,
  .stats {
    border-bottom: 1px solid #c01010;
  }
  .book th,
  .stats th {
    width: 45px;
  }
  .book td {
    width: 62px;
  }
  .book .amount {
    width: auto;
    padding-left: 15px;
    text-align: left;
  }
  .best td {
    height: 30px;
    font-size: 21px;
    line-height: 30px;
  }
  .stats td {
    width: 62px;
  }
  .stats .second {
    padding-left: 15px;
  }
  .stats .second + td {
    width: auto;
    padding-right: 5px;
  }
  .ticks th,
  .ticks td {
    height: 22px;
    line-height: 22px;
    width: 48px;
    padding: 0;
    text-align: right;
  }
  .ticks th {
    color: #808080;
  }
  .ticks .time {
    width: 36px;
    padding-left: 5px;
    text-align: left;
  }
  .ticks th:nth-child(2) {
    width: 66px;
  }
  .ticks .kind {
    width: 35px;
    padding-right: 2px;
    font-weight: 400;
  }
  .ticks .clock {
    padding-right: 2px;
    font-size: 12px;
    font-weight: 400;
    color: #ddd;
  }
  .ticks .clock.full {
    padding-right: 1px;
    font-size: 14px;
    font-weight: 700;
    color: #eee;
  }
  .foot {
    flex: none;
    display: flex;
    margin-top: auto;
    height: 13px;
    overflow: hidden;
    font-size: 12px;
    line-height: 16px;
  }
  .foot button {
    width: 36px;
    padding-left: 8px;
  }
  .foot span {
    flex: 1;
    border-top: 1px solid #c01010;
    border-left: 1px solid #c01010;
    border-radius: 3px 0 0 0;
  }
</style>
